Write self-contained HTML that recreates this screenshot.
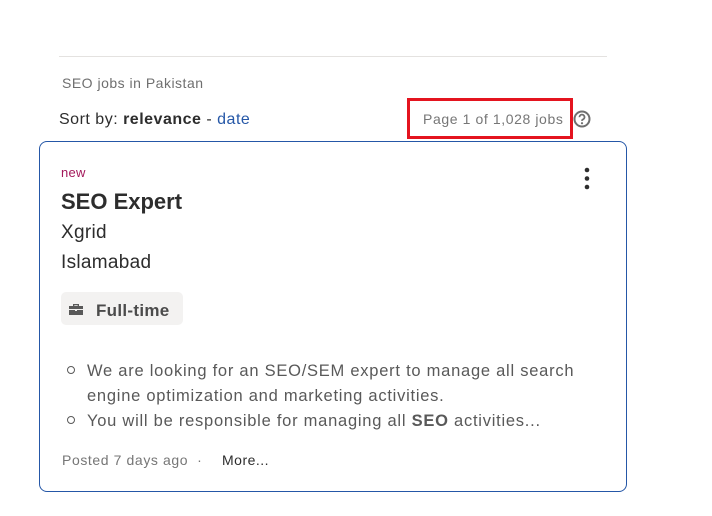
<!DOCTYPE html>
<html><head><meta charset="utf-8"><style>
body{margin:0;width:712px;height:516px;background:#fff;font-family:"Liberation Sans",sans-serif;position:relative;overflow:hidden}
.a{position:absolute;white-space:nowrap}
</style></head><body>
<div class="a" style="left:59px;top:56px;width:548px;height:1px;background:#e4e2e0"></div>
<div class="a" style="left:62px;top:75px;font-size:14px;color:#6f6f6f;letter-spacing:0.5px">SEO jobs in Pakistan</div>
<div class="a" style="left:59px;top:111px;font-size:16px;color:#2d2d2d;letter-spacing:0.5px">Sort by: <b>relevance</b> - <span style="color:#2557a7">date</span></div>
<div class="a" style="left:407px;top:98px;width:160px;height:35px;border:3px solid #e4141f"></div>
<div class="a" style="left:423px;top:111px;font-size:14px;color:#767676;letter-spacing:0.6px">Page 1 of 1,028 jobs</div>
<svg class="a" style="left:573px;top:110px" width="18" height="18" viewBox="0 0 18 18"><circle cx="9" cy="9" r="7.5" fill="none" stroke="#6f6f6f" stroke-width="2"/><path d="M6.5 7.2a2.5 2.5 0 1 1 3.5 2.2c-.7.3-1 .8-1 1.5" fill="none" stroke="#6f6f6f" stroke-width="1.8"/><circle cx="9" cy="13.2" r="1.1" fill="#6f6f6f"/></svg>
<div class="a" style="left:39px;top:141px;width:586px;height:349px;border:1px solid #2557a7;border-radius:8px"></div>
<div class="a" style="left:61px;top:165px;font-size:13px;color:#a3195b;letter-spacing:0.3px">new</div>
<svg class="a" style="left:582px;top:166px" width="10" height="26"><circle cx="5" cy="4" r="2.3" fill="#2d2d2d"/><circle cx="5" cy="12.5" r="2.3" fill="#2d2d2d"/><circle cx="5" cy="21" r="2.3" fill="#2d2d2d"/></svg>
<div class="a" style="left:61px;top:189px;font-size:22px;font-weight:bold;color:#2d2d2d">SEO Expert</div>
<div class="a" style="left:61px;top:222px;font-size:19px;color:#2d2d2d;letter-spacing:0.3px">Xgrid</div>
<div class="a" style="left:61px;top:252px;font-size:19px;color:#2d2d2d;letter-spacing:0.3px">Islamabad</div>
<div class="a" style="left:61px;top:292px;width:122px;height:33px;background:#f3f2f1;border-radius:5px"></div>
<svg class="a" style="left:68px;top:301px" width="16" height="16" viewBox="0 0 16 16"><path d="M5 3h6v2h4v3H1V5h4zM6.3 4.2v.8h3.4v-.8zM1 9h6v1h2V9h6v5H1z" fill="#595959"/></svg>
<div class="a" style="left:96px;top:301px;font-size:17px;font-weight:bold;color:#4b4b4b;letter-spacing:0.3px">Full-time</div>
<div class="a" style="left:67px;top:366px;width:6px;height:6px;border:1px solid #595959;border-radius:50%"></div>
<div class="a" style="left:67px;top:416px;width:6px;height:6px;border:1px solid #595959;border-radius:50%"></div>
<div class="a" style="left:87px;top:359px;font-size:16.5px;color:#595959;line-height:25px;letter-spacing:0.75px">We are looking for an SEO/SEM expert to manage all search<br>engine optimization and marketing activities.<br>You will be responsible for managing all <b>SEO</b> activities...</div>
<div class="a" style="left:62px;top:452px;font-size:14px;color:#767676;letter-spacing:0.6px">Posted 7 days ago &nbsp;·</div>
<div class="a" style="left:222px;top:452px;font-size:14px;color:#2d2d2d;letter-spacing:0.5px">More...</div>
</body></html>
